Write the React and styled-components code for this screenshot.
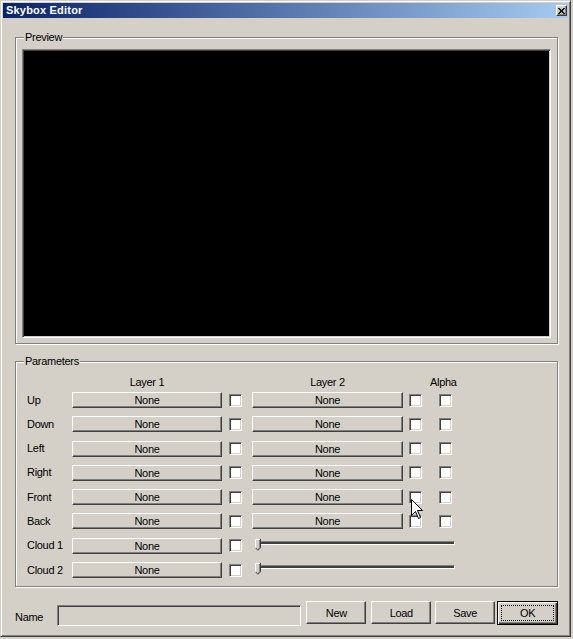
import React from 'react'
import styled, { createGlobalStyle } from 'styled-components'

const GlobalStyle = createGlobalStyle`
  html, body {
    margin: 0;
    background: #d4d0c8;
  }
  body {
    font-family: 'Liberation Sans', Arial, sans-serif;
    font-size: 11px;
    color: #000;
  }
`

const Window = styled.div`
  position: relative;
  box-sizing: border-box;
  width: 571px;
  height: 637px;
  padding: 2px;
  background: #d4d0c8;
  border: 1px solid;
  border-color: #d4d0c8 #404040 #404040 #d4d0c8;
  box-shadow: inset 1px 1px #fff, inset -1px -1px #808080;
  display: flex;
  flex-direction: column;
`

const TitleBar = styled.div`
  height: 15px;
  display: flex;
  align-items: center;
  justify-content: space-between;
  background: linear-gradient(to right, #0a246a, #a6caf0);
`

const Title = styled.span`
  padding-left: 3px;
  color: #fff;
  font-weight: bold;
  font-size: 11px;
  letter-spacing: 0.2px;
  line-height: 15px;
`

const CloseButton = styled.div`
  box-sizing: border-box;
  width: 11px;
  height: 11px;
  margin-right: 1px;
  display: flex;
  align-items: center;
  justify-content: center;
  background: #d4d0c8;
  border: 1px solid;
  border-color: #fff #404040 #404040 #fff;
  box-shadow: inset -1px -1px #808080;
`

const Body = styled.div`
  flex: 1;
  display: flex;
  flex-direction: column;
  padding: 19px 10px 0 12px;
`

const Group = styled.div`
  position: relative;
  box-sizing: border-box;
  height: ${p => p.$height}px;
  margin-bottom: ${p => p.$after}px;
  padding: ${p => p.$padding};
  border: 1px solid #808080;
  box-shadow: 1px 1px 0 #fff, inset 1px 1px 0 #fff;
  display: flex;
  flex-direction: column;
`

const GroupLabel = styled.span`
  position: absolute;
  top: -7px;
  left: 8px;
  padding: 0 1px;
  background: #d4d0c8;
  line-height: 13px;
  letter-spacing: -0.3px;
`

const Screen = styled.div`
  flex: 1;
  background: #000;
  border: 1px solid;
  border-color: #808080 #fff #fff #808080;
  box-shadow: inset 1px 1px #404040, inset -1px -1px #d4d0c8;
`

const Columns = styled.div`
  display: grid;
  grid-template-columns: 45px 157px 23px 157px 30px 13px;
`

const HeaderRow = styled(Columns)`
  height: 13px;
  margin-bottom: 3px;
  line-height: 13px;
  letter-spacing: -0.3px;
`

const HeaderCell = styled.span`
  grid-column: ${p => p.$col};
  width: ${p => p.$width}px;
  margin-left: ${p => p.$shift || 0}px;
  text-align: center;
  white-space: nowrap;
`

const ParamGrid = styled(Columns)`
  grid-auto-rows: 16px;
  row-gap: 8.3px;
  align-items: center;
`

const RowLabel = styled.span`
  letter-spacing: -0.3px;
  line-height: 13px;
`

const Button = styled.button`
  box-sizing: border-box;
  width: ${p => p.$width}px;
  height: ${p => p.$height}px;
  margin-left: ${p => p.$gap || 0}px;
  padding: 0;
  font: inherit;
  letter-spacing: -0.3px;
  color: #000;
  background: #d4d0c8;
  border: 1px solid;
  border-color: #fff #404040 #404040 #fff;
  box-shadow: inset -1px -1px #808080;
  border-radius: 0;
  display: flex;
  align-items: center;
  justify-content: center;
`

const DefaultButton = styled(Button)`
  border-color: #000;
  box-shadow: inset 1px 1px #fff, inset -1px -1px #404040, inset -2px -2px #808080;
  padding: 3px;
`

const FocusRect = styled.span`
  flex: 1;
  align-self: stretch;
  display: flex;
  align-items: center;
  justify-content: center;
  border: 1px dotted #000;
`

const Check = styled.span`
  box-sizing: border-box;
  width: 13px;
  height: 13px;
  background: #fff;
  border: 1px solid;
  border-color: #808080 #fff #fff #808080;
  box-shadow: inset 1px 1px #404040, inset -1px -1px #d4d0c8;
`

const Slider = styled.div`
  grid-column: 4 / 7;
  position: relative;
  align-self: start;
  width: 203px;
  height: 11px;
  margin: 1px 0 0 3px;
`

const Track = styled.div`
  box-sizing: border-box;
  width: 198px;
  height: 4px;
  margin: 2px 0 0 2px;
  background: #404040;
  border: 1px solid;
  border-color: #808080 #fff #fff #808080;
`

const Thumb = styled.svg`
  position: absolute;
  left: 0;
  top: 0;
`

const Footer = styled.div`
  display: flex;
  align-items: flex-start;
  margin-top: 14px;
`

const NameLabel = styled.span`
  width: 42px;
  margin-top: 10px;
  line-height: 13px;
  letter-spacing: -0.3px;
`

const NameInput = styled.div`
  box-sizing: border-box;
  width: 245px;
  height: 21px;
  margin-top: 4px;
  background: #d4d0c8;
  border: 1px solid;
  border-color: #808080 #fff #fff #808080;
  box-shadow: inset 1px 1px #404040, inset -1px -1px #d4d0c8;
`

const Cursor = styled.svg`
  position: absolute;
  left: 410px;
  top: 498px;
`

const faces = ['Up', 'Down', 'Left', 'Right', 'Front', 'Back']
const clouds = ['Cloud 1', 'Cloud 2']

function SliderThumb() {
  return (
    <Thumb width="7" height="12" viewBox="0 0 7 12">
      <polygon points="0,0 6,0 6,9 3,12 0,9" fill="#d4d0c8" />
      <path d="M0.5,9 V0.5 H5" stroke="#fff" fill="none" />
      <path d="M5.5,0 V8.8 L3,11.3 L0.5,8.8" stroke="#404040" fill="none" />
      <path d="M4.5,1 V8.4 L3,9.9" stroke="#808080" fill="none" />
    </Thumb>
  )
}

export default function App() {
  return (
    <>
      <GlobalStyle />
      <Window>
        <TitleBar>
          <Title>Skybox Editor</Title>
          <CloseButton>
            <svg width="7" height="6" viewBox="0 0 7 6">
              <path d="M0.5,0 L6.5,6 M6.5,0 L0.5,6" stroke="#000" strokeWidth="1.4" />
            </svg>
          </CloseButton>
        </TitleBar>
        <Body>
          <Group $height={307} $after={17} $padding="11px 6px 5px 6px">
            <GroupLabel>Preview</GroupLabel>
            <Screen />
          </Group>

          <Group $height={226} $after={0} $padding="14px 10px 0 11px">
            <GroupLabel>Parameters</GroupLabel>
            <HeaderRow>
              <HeaderCell $col={2} $width={150}>Layer 1</HeaderCell>
              <HeaderCell $col={4} $width={151}>Layer 2</HeaderCell>
              <HeaderCell $col={6} $width={26} $shift={-9}>Alpha</HeaderCell>
            </HeaderRow>
            <ParamGrid>
              {faces.map(name => (
                <React.Fragment key={name}>
                  <RowLabel>{name}</RowLabel>
                  <Button $width={150} $height={16}>None</Button>
                  <Check />
                  <Button $width={151} $height={16}>None</Button>
                  <Check />
                  <Check />
                </React.Fragment>
              ))}
              {clouds.map(name => (
                <React.Fragment key={name}>
                  <RowLabel>{name}</RowLabel>
                  <Button $width={150} $height={16}>None</Button>
                  <Check />
                  <Slider>
                    <Track />
                    <SliderThumb />
                  </Slider>
                </React.Fragment>
              ))}
            </ParamGrid>
          </Group>

          <Footer>
            <NameLabel>Name</NameLabel>
            <NameInput />
            <Button $width={60} $height={23} $gap={5}>New</Button>
            <Button $width={60} $height={23} $gap={5}>Load</Button>
            <Button $width={60} $height={23} $gap={4}>Save</Button>
            <DefaultButton $width={61} $height={24} $gap={2}>
              <FocusRect>OK</FocusRect>
            </DefaultButton>
          </Footer>
        </Body>

        <Cursor width="13" height="21" viewBox="0 0 13 21">
          <path
            d="M0.5,0.5 V16.5 L4.5,12.5 L7.5,19.5 L9.5,18.5 L6.5,11.5 H11.5 Z"
            fill="#fff"
            stroke="#000"
            strokeWidth="1"
          />
        </Cursor>
      </Window>
    </>
  )
}
